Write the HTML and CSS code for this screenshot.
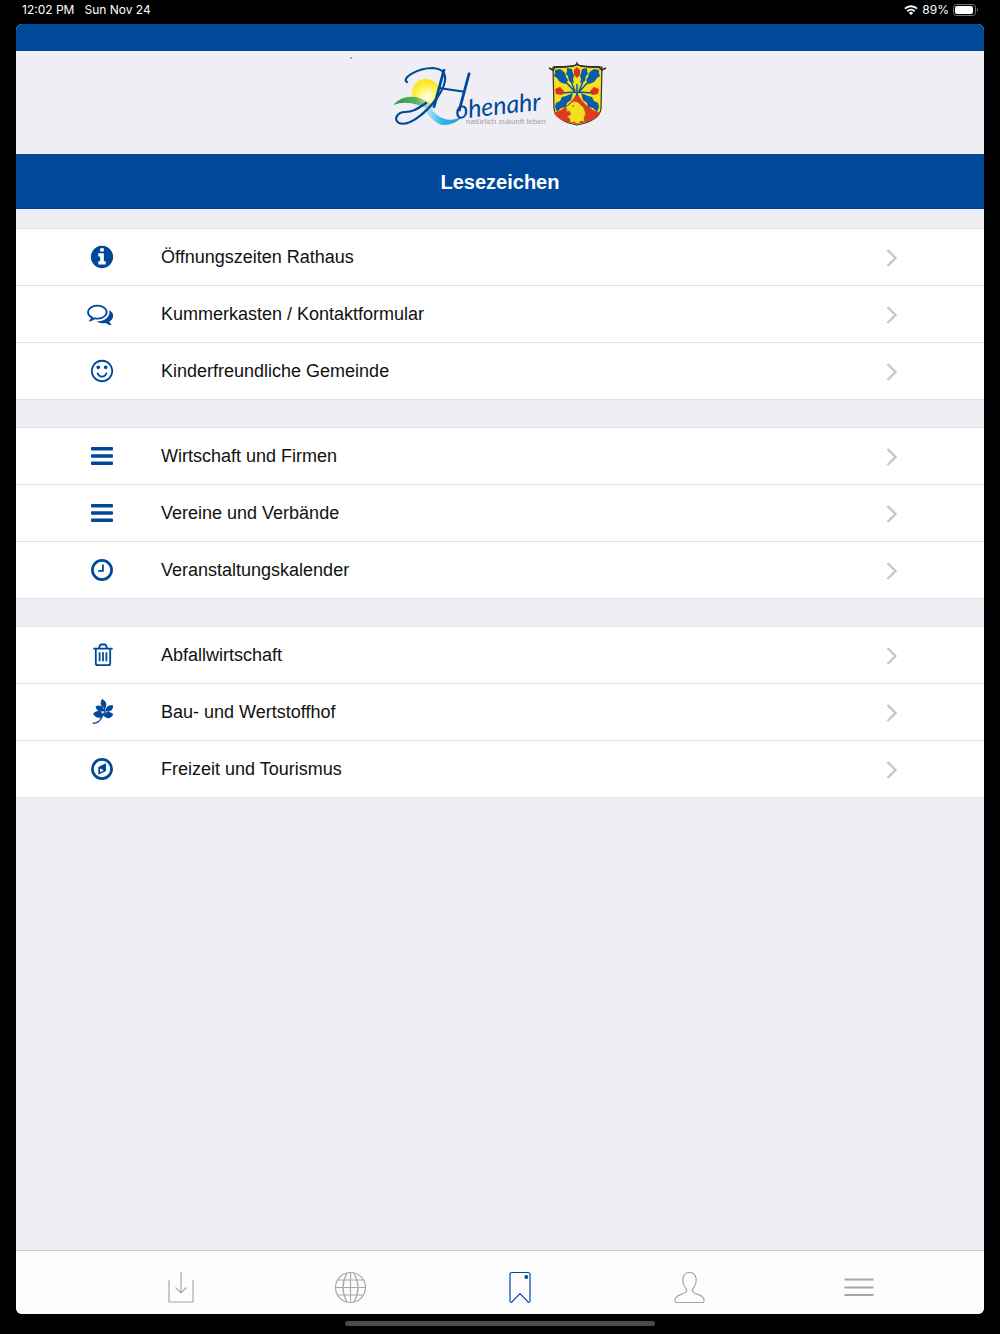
FILE: index.html
```html
<!DOCTYPE html>
<html lang="de">
  <head>
    <meta charset="UTF-8" />
    <meta name="viewport" content="width=device-width, initial-scale=1.0" />
    <title>Lesezeichen</title>
    <link rel="stylesheet" href="styles.css">
  </head>
  <body>
    <div class="status-bar">
      <span>12:02 PM</span>
      <span>Sun Nov 24</span>
      <span class="status-right">
        <svg width="14" height="12" viewBox="0 0 14 12" fill="none" stroke="#fff" stroke-width="2">
          <path d="M1 4.6a8.6 8.6 0 0 1 12 0M3.3 7.2a5.3 5.3 0 0 1 7.4 0" />
          <path d="M7 11 4.9 8.9a3 3 0 0 1 4.2 0z" fill="#fff" stroke="none" />
        </svg>
        89%
        <svg width="25" height="12" viewBox="0 0 25 12">
          <rect x="0.5" y="0.5" width="22" height="11" rx="3" fill="none" stroke="#777" />
          <rect x="2" y="2" width="18" height="8" rx="2" fill="#fff" />
          <path d="M24 4q2 2 0 4z" fill="#777" />
        </svg>
      </span>
    </div>

    <div class="app">
      <div class="top-strip"></div>

      <header class="logo-bar">
        <svg class="logo" width="240" height="90" viewBox="0 1 240 90" role="img" aria-label="Hohenahr">
          <defs>
            <radialGradient id="sun" cx="0.55" cy="0.65" r="0.6">
              <stop offset="0" stop-color="#fffff0" />
              <stop offset="0.4" stop-color="#fff98c" />
              <stop offset="1" stop-color="#fbe716" />
            </radialGradient>
            <linearGradient id="hill">
              <stop offset="0" stop-color="#229a40" />
              <stop offset="0.5" stop-color="#55b060" />
              <stop offset="1" stop-color="#efeef4" />
            </linearGradient>
            <linearGradient id="water">
              <stop offset="0" stop-color="#d9effa" />
              <stop offset="0.5" stop-color="#35b5ea" />
              <stop offset="1" stop-color="#2f8fd6" />
            </linearGradient>
          </defs>
          <circle cx="-29" cy="8" r="0.7" fill="#333" />
          <circle cx="46" cy="43" r="14" fill="url(#sun)" />
          <path d="M13 55q9-10 23-8 11 3 21 12l-6 3q-20-14-38-7z" fill="url(#hill)" />
          <path d="M42 56q9 3 15 9 12 9 26 1-9 10-21 9-9-2-20-19z" fill="url(#water)" />
          <path d="M27 32C21 29 36 18 53 18c15 1 16 13 4 30C46 63 29 77 19 73c-6-3-2-11 6-11 8 0 12-3 21-9" fill="none" stroke="#00489a" stroke-width="2.2" stroke-linecap="round" />
          <g class="wordmark">
            <text class="wordmark-initial" x="49" y="58" transform="rotate(8 56 58)">H</text>
            <text class="wordmark-rest" x="76" y="69" transform="rotate(-6 76 69)">ohenahr</text>
          </g>
          <text class="tagline" x="86" y="74">natürlich zukunft leben</text>

          <path d="M173 17q23 0 24-3 1 3 25 3l-1 42q-2 12-24 16-21-4-23-16z" fill="#f4e01f" stroke="#33302c" stroke-width="1.2" />
          <path d="M169 18l4 2 2-3q21 0 22-3 1 3 22 3l3 3 4-2" fill="none" stroke="#33302c" stroke-width="1.8" />
          <path d="M197 43q8 15 23 20-4 8-23 11-19-3-23-11 15-5 23-20z" fill="#e03a22" />
          <path d="M197 46V34M196 43l-12-13M198 43l12-13M195 41l-5-12M199 41l5-12M195 42l-13 1M199 42l13 1" fill="none" stroke="#07589f" stroke-width="1.5" />
          <g fill="#0a5ca6">
            <path d="M175 20l5-1 3 2 2 2 1 4 2 3-2 4-4-1-3-2-2-3-3-2 1-3z" />
            <path d="M219 20l-5-1-3 2-2 2-1 4-2 3 2 4 4-1 3-2 2-3 3-2-1-3z" />
            <path d="M187 18l5 1 1 4 1 3-1 3 1 4-5-2-1-5-2-2 1-3z" />
            <path d="M207 18l-5 1-1 4-1 3 1 3-1 4 5-2 1-5 2-2-1-3z" />
            <path d="M193 43l-2 7-4 3-1 4-5 1-4 4-2-5 1-4 4-2 2-4 4-1z" />
            <path d="M201 43l2 7 4 3 1 4 5 1 4 4 2-5-1-4-4-2-2-4-4-1z" />
          </g>
          <g fill="#dc2e24">
            <path d="M194 20l3-3 3 3v5l-3 3-3-3z" />
            <path d="M175 39l5-2 4 4-2 4-6-1z" />
            <path d="M219 39l-5-2-4 4 2 4 6-1z" />
          </g>
          <path d="M190 54q4-5 9-1l5 5q3 6 0 10l1 4-4-1-3 3-4-2-4 1v-4l-3-2 4-3-2-3-3 1 1-3-2-1z" fill="#f5dd20" stroke="#86671c" stroke-width="0.6" />
          <circle cx="193" cy="56" r="0.8" fill="#5b4310" />
        </svg>
      </header>

      <h1 class="page-title">Lesezeichen</h1>

      <main class="content">
        <ul class="list">
          <li>
            <a href="#">
              <svg class="icon" viewBox="0 0 1792 1792"><path d="M1152 1376v-160q0-14-9-23t-23-9h-96v-512q0-14-9-23t-23-9h-320q-14 0-23 9t-9 23v160q0 14 9 23t23 9h96v320h-96q-14 0-23 9t-9 23v160q0 14 9 23t23 9h448q14 0 23-9t9-23zm-128-896v-160q0-14-9-23t-23-9h-192q-14 0-23 9t-9 23v160q0 14 9 23t23 9h192q14 0 23-9t9-23zm640 416q0 209-103 385.5t-279.5 279.5-385.5 103-385.5-103-279.5-279.5-103-385.5 103-385.5 279.5-279.5 385.5-103 385.5 103 279.5 279.5 103 385.5z" /></svg>
              <span class="label">Öffnungszeiten Rathaus</span>
              <svg class="chevron" viewBox="0 0 12 18"><path d="M1.5 2 9.5 10 1.5 18" /></svg>
            </a>
          </li>
          <li>
            <a href="#">
              <svg class="icon" viewBox="128 0 1792 1792"><path d="M704 384q-153 0-286 52t-211.5 141-78.5 191q0 82 53 158t149 132l97 56-35 84q34-20 62-39l44-31 53 10q78 14 153 14 153 0 286-52t211.5-141 78.5-191-78.5-191-211.5-141-286-52zm0-128q191 0 353.5 68.5t256.5 186.5 94 257-94 257-256.5 186.5-353.5 68.5q-86 0-176-16-124 88-278 128-36 9-86 16h-3q-11 0-20.5-8t-11.5-21q-1-3-1-6.5t.5-6.5 2-6l2.5-5 3.5-5.5 4-5 4.5-5 4-4.5q5-6 23-25t26-29.5 22.5-29 25-38.5 20.5-44q-124-72-195-177t-71-224q0-139 94-257t256.5-186.5 353.5-68.5zm822 1169q10 24 20.5 44t25 38.5 22.5 29 26 29.5 23 25q1 1 4 4.5t4.5 5 4 5 3.5 5.5l2.5 5 2 6 .5 6.5-1 6.5q-3 14-13 22t-22 7q-50-7-86-16-154-40-278-128-90 16-176 16-271 0-472-132 58 4 88 4 161 0 309-45t264-129q125-92 192-212t67-254q0-77-23-152 129 71 204 178t75 230q0 120-71 224.5t-195 176.5z" /></svg>
              <span class="label">Kummerkasten / Kontaktformular</span>
              <svg class="chevron" viewBox="0 0 12 18"><path d="M1.5 2 9.5 10 1.5 18" /></svg>
            </a>
          </li>
          <li>
            <a href="#">
              <svg class="icon" viewBox="0 0 1792 1792"><path d="M1262 1075q-37 121-138 195t-228 74-228-74-138-195q-8-25 4-48.5t38-31.5q25-8 48.5 4t31.5 38q25 80 92.5 129.5t151.5 49.5 151.5-49.5 92.5-129.5q8-26 32-38t49-4 37 31.5 4 48.5zm-494-435q0 53-37.5 90.5t-90.5 37.5-90.5-37.5-37.5-90.5 37.5-90.5 90.5-37.5 90.5 37.5 37.5 90.5zm512 0q0 53-37.5 90.5t-90.5 37.5-90.5-37.5-37.5-90.5 37.5-90.5 90.5-37.5 90.5 37.5 37.5 90.5zm256 256q0-130-51-248.5t-136.5-204-204-136.5-248.5-51-248.5 51-204 136.5-136.5 204-51 248.5 51 248.5 136.5 204 204 136.5 248.5 51 248.5-51 204-136.5 136.5-204 51-248.5zm128 0q0 209-103 385.5t-279.5 279.5-385.5 103-385.5-103-279.5-279.5-103-385.5 103-385.5 279.5-279.5 385.5-103 385.5 103 279.5 279.5 103 385.5z" /></svg>
              <span class="label">Kinderfreundliche Gemeinde</span>
              <svg class="chevron" viewBox="0 0 12 18"><path d="M1.5 2 9.5 10 1.5 18" /></svg>
            </a>
          </li>
        </ul>

        <ul class="list">
          <li>
            <a href="#">
              <svg class="icon" viewBox="0 0 26 26"><path d="M3 4h20q1 0 1 1v1.6q0 1-1 1H3q-1 0-1-1V5q0-1 1-1zM3 11.2h20q1 0 1 1v1.6q0 1-1 1H3q-1 0-1-1v-1.6q0-1 1-1zM3 18.4h20q1 0 1 1V21q0 1-1 1H3q-1 0-1-1v-1.6q0-1 1-1z" /></svg>
              <span class="label">Wirtschaft und Firmen</span>
              <svg class="chevron" viewBox="0 0 12 18"><path d="M1.5 2 9.5 10 1.5 18" /></svg>
            </a>
          </li>
          <li>
            <a href="#">
              <svg class="icon" viewBox="0 0 26 26"><path d="M3 4h20q1 0 1 1v1.6q0 1-1 1H3q-1 0-1-1V5q0-1 1-1zM3 11.2h20q1 0 1 1v1.6q0 1-1 1H3q-1 0-1-1v-1.6q0-1 1-1zM3 18.4h20q1 0 1 1V21q0 1-1 1H3q-1 0-1-1v-1.6q0-1 1-1z" /></svg>
              <span class="label">Vereine und Verbände</span>
              <svg class="chevron" viewBox="0 0 12 18"><path d="M1.5 2 9.5 10 1.5 18" /></svg>
            </a>
          </li>
          <li>
            <a href="#">
              <svg class="icon icon-line" viewBox="0 0 26 26"><circle cx="13" cy="13" r="9.6" stroke-width="2.7" /><path d="M13.9 7.6v6.3H9.2" stroke-width="1.8" /></svg>
              <span class="label">Veranstaltungskalender</span>
              <svg class="chevron" viewBox="0 0 12 18"><path d="M1.5 2 9.5 10 1.5 18" /></svg>
            </a>
          </li>
        </ul>

        <ul class="list">
          <li>
            <a href="#">
              <svg class="icon icon-line" viewBox="0 0 26 26" stroke-width="1.8"><path d="M4.3 6.6h19.4M6.8 6.6v14.6q0 2 2 2h10.4q2 0 2-2V6.6M9.9 6.4l1.1-3q.4-.9 1.4-.9h3.2q1 0 1.4.9l1.1 3M10.6 10.2v9M14 10.2v9M17.4 10.2v9" /></svg>
              <span class="label">Abfallwirtschaft</span>
              <svg class="chevron" viewBox="0 0 12 18"><path d="M1.5 2 9.5 10 1.5 18" /></svg>
            </a>
          </li>
          <li>
            <a href="#">
              <svg class="icon" viewBox="0 0 26 26">
                <path d="M13 0c4 2 5.500 5 3.500 9-5-1-6-5-3.500-9zM6.500 7.500c5-2.500 8 0 9 4.500-4.500 1.500-8 0-9-4.500zM24 6.300c.3 5-2.500 7-7.400 6 0-5 3-6.500 7.400-6zM4 14.800c4-4.500 8-3.500 10.500 1.200-3 4-7.500 4-10.500-1.200zM24.300 15.500c-2.500 4.500-6.500 5-9.800 1 2-4.500 6-5 9.800-1z" />
                <path d="M4.300 24.300q5.500 0 8.300-5.800l3.400-6-.6-4" fill="none" stroke="#00489a" stroke-width="1.400" stroke-linecap="round" />
              </svg>
              <span class="label">Bau- und Wertstoffhof</span>
              <svg class="chevron" viewBox="0 0 12 18"><path d="M1.5 2 9.5 10 1.5 18" /></svg>
            </a>
          </li>
          <li>
            <a href="#">
              <svg class="icon icon-line" viewBox="0 0 26 26"><circle cx="13" cy="13" r="9.6" stroke-width="2.7" /><path d="M9.3 11 17 7.2v7.8L9.3 18.8z" fill="#00489a" stroke="none" /><path d="M11 12.6v3.6l3.8-1.9z" fill="#fff" stroke="none" /></svg>
              <span class="label">Freizeit und Tourismus</span>
              <svg class="chevron" viewBox="0 0 12 18"><path d="M1.5 2 9.5 10 1.5 18" /></svg>
            </a>
          </li>
        </ul>
      </main>

      <nav class="tab-bar">
        <a href="#" aria-label="Download">
          <svg viewBox="0 0 36 36"><path d="M6 11v22h24V11M18 3v21M12.5 18.5l5.5 5.5 5.5-5.5" /></svg>
        </a>
        <a href="#" aria-label="Web">
          <svg viewBox="0 0 36 36"><circle cx="18.5" cy="18.5" r="15" /><path d="M18.5 3.5v30M3.5 18.5h30M6 11h25M6 26h25M15 4q-8 14.5 0 29M22 4q8 14.5 0 29" /></svg>
        </a>
        <a href="#" class="active" aria-label="Lesezeichen">
          <svg viewBox="0 0 36 36"><path d="M10 3.5h16q2 0 2 2v26.5q0 1.500-1.500 1.500l-8.500-9-8.500 9q-1.500 0-1.500-1.500V5.500q0-2 2-2z" /><circle cx="24.3" cy="8" r="1.3" fill="#00489a" /></svg>
        </a>
        <a href="#" aria-label="Profil">
          <svg viewBox="0 0 36 36"><path d="M17.500 3.500c-5.500 0-7.500 5-6.500 10 .5 3 2 4.500 3.500 7 .5 1.500 0 2.500-2 3.500-4 2-9.500 3-9.500 6.500v2q0 1 1 1h27q1 0 1-1v-2c0-3.500-5.500-4.500-9.500-6.500-2-1-2.500-2-2-3.500 1.500-2.500 3-4 3.500-7 1-5-1-10-6.500-10z" /></svg>
        </a>
        <a href="#" aria-label="Menü">
          <svg viewBox="0 0 36 36" class="menu"><path d="M3.5 10.5h29M3.5 18.5h29M3.5 26h29" /></svg>
        </a>
      </nav>
    </div>

    <div class="home-area"><div class="home-indicator"></div></div>
  </body>
</html>
```

FILE: styles.css
```css
* {
  margin: 0;
  padding: 0;
  box-sizing: border-box;
}

body {
  min-height: 100vh;
  display: flex;
  flex-direction: column;
  background: #000;
  color: #111;
  font-family: "Liberation Sans", Arial, sans-serif;
}

a {
  color: inherit;
  text-decoration: none;
}

.status-bar {
  display: flex;
  align-items: center;
  gap: 10px;
  height: 24px;
  padding: 0 22px 5px;
  color: #fff;
  font-family: Inter, sans-serif;
  font-size: 12px;
}

.status-right {
  display: flex;
  align-items: center;
  gap: 4px;
  margin-left: auto;
}

.app {
  flex: 1;
  display: flex;
  flex-direction: column;
  margin: 0 16px;
  border-radius: 6px;
  overflow: hidden;
  background: #efeef4;
}

.top-strip {
  height: 27px;
  background: #00489a;
}

.logo-bar {
  display: flex;
  justify-content: center;
  height: 103px;
}

.logo {
  overflow: visible;
}

.wordmark {
  fill: #00489a;
  font-family: Lato, sans-serif;
  font-style: italic;
}

.wordmark-initial {
  font-size: 56px;
  font-weight: 300;
}

.wordmark-rest {
  font-size: 25px;
}

.tagline {
  fill: #a0a0a5;
  font-family: "Liberation Sans Narrow", "Liberation Sans", sans-serif;
  font-size: 8px;
}

.page-title {
  background: #00489a;
  color: #fff;
  font-size: 20px;
  line-height: 56px;
  height: 55px;
  text-align: center;
}

.content {
  flex: 1;
  display: flex;
  flex-direction: column;
  gap: 27px;
  padding-top: 19px;
}

.list {
  list-style: none;
  background: #fff;
  border-top: 1px solid #e2e2e5;
}

.list li {
  border-bottom: 1px solid #e2e2e5;
}

.list a {
  display: flex;
  align-items: center;
  height: 56px;
  padding: 0 86px 0 73px;
}

.icon {
  width: 26px;
  height: 26px;
  margin-right: 46px;
  fill: #00489a;
  overflow: visible;
}

.icon-line {
  fill: none;
  stroke: #00489a;
}

.label {
  flex: 1;
  font-size: 18px;
}

.chevron {
  width: 12px;
  height: 18px;
  fill: none;
  stroke: #c7c7cb;
  stroke-width: 2.4;
  overflow: visible;
}

.tab-bar {
  display: flex;
  height: 64px;
  padding: 9px 40px 0 80px;
  background: #fdfdfd;
  border-top: 1px solid #c8c7cc;
}

.tab-bar a {
  flex: 1;
  display: flex;
  align-items: center;
  justify-content: center;
}

.tab-bar svg {
  width: 36px;
  height: 36px;
  fill: none;
  stroke: #a8a8a8;
  stroke-width: 1.2;
}

.tab-bar .active svg {
  stroke: #00489a;
}

.tab-bar .menu {
  stroke-width: 2;
}

.home-area {
  height: 20px;
  padding-top: 7px;
}

.home-indicator {
  width: 31%;
  height: 5px;
  margin: 0 auto;
  border-radius: 3px;
  background: #4b4b4b;
}
```
